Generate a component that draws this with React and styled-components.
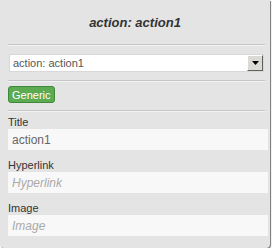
import React from 'react';
import styled, { createGlobalStyle } from 'styled-components';

const fields = [
  { id: 'title', label: 'Title', value: 'action1', placeholder: 'Title' },
  { id: 'hyperlink', label: 'Hyperlink', value: '', placeholder: 'Hyperlink' },
  { id: 'image', label: 'Image', value: '', placeholder: 'Image' },
];

const App = () => {
  return (
    <>
      <GlobalStyle />
      <Panel>
        <Header>action: action1</Header>
        <Divider />
        <SelectBox>
          <SelectValue>action: action1</SelectValue>
          <SelectArrow>
            <svg width="7" height="4" viewBox="0 0 7 4">
              <path d="M0 0h7L3.5 4z" fill="#000" />
            </svg>
          </SelectArrow>
        </SelectBox>
        <Divider />
        <TagButton>Generic</TagButton>
        <Divider />
        <FieldList>
          {fields.map(({ id, label, value, placeholder }) => (
            <Field key={id}>
              <Label htmlFor={id}>{label}</Label>
              <Input id={id} defaultValue={value} placeholder={placeholder} />
            </Field>
          ))}
        </FieldList>
      </Panel>
    </>
  );
};

const GlobalStyle = createGlobalStyle`
  body {
    margin: 0;
    background: #ffffff;
    font-family: "Liberation Sans", Arial, sans-serif;
  }
`;

const Panel = styled.div`
  width: 270px;
  height: 248px;
  box-sizing: border-box;
  padding: 0 2px 12px 8px;
  background: #e4e4e4;
  border-radius: 0 0 4px 4px;
  box-shadow: 1px 1px 1px rgba(0, 0, 0, 0.55);
  display: flex;
  flex-direction: column;
`;

const Header = styled.div`
  height: 45px;
  margin-left: -8px;
  margin-right: -2px;
  display: flex;
  align-items: center;
  justify-content: center;
  font-size: 13px;
  font-weight: bold;
  font-style: italic;
  color: #333333;
`;

const Divider = styled.div`
  height: 0;
  margin-right: 3px;
  border-top: 1px solid #c6c6c6;
  border-bottom: 1px solid #f2f2f2;
`;

const SelectBox = styled.div`
  height: 18px;
  margin: 8px 4px 8px 1px;
  display: flex;
  align-items: center;
  background: #ffffff;
  border: 1px solid #d8d8d8;
  box-sizing: border-box;
`;

const SelectValue = styled.span`
  flex: 1;
  padding-left: 3px;
  font-size: 11px;
  color: #555555;
`;

const SelectArrow = styled.span`
  width: 16px;
  height: 16px;
  box-sizing: border-box;
  display: flex;
  align-items: center;
  justify-content: center;
  background: #dcdad4;
  border: 1px solid;
  border-color: #ffffff #606060 #606060 #ffffff;
`;

const TagButton = styled.button`
  align-self: flex-start;
  height: 17px;
  margin: 4px 0 7px;
  padding: 0 3px;
  font-family: "Liberation Sans", Arial, sans-serif;
  font-size: 11px;
  color: #ffffff;
  background: #5caa52;
  border: 1px solid #3f8838;
  border-radius: 3px;
  cursor: pointer;
`;

const FieldList = styled.div`
  margin-top: 3px;
  display: flex;
  flex-direction: column;
  gap: 8px;
`;

const Field = styled.div`
  display: flex;
  flex-direction: column;
`;

const Label = styled.label`
  font-size: 11px;
  line-height: 14px;
  color: #333333;
`;

const Input = styled.input`
  height: 21px;
  box-sizing: border-box;
  padding: 0 4px;
  border: none;
  outline: none;
  background: #f8f8f8;
  font-family: "Liberation Sans", Arial, sans-serif;
  font-size: 12px;
  color: #666666;

  &::placeholder {
    font-style: italic;
    color: #aaaaaa;
  }
`;

export default App;
